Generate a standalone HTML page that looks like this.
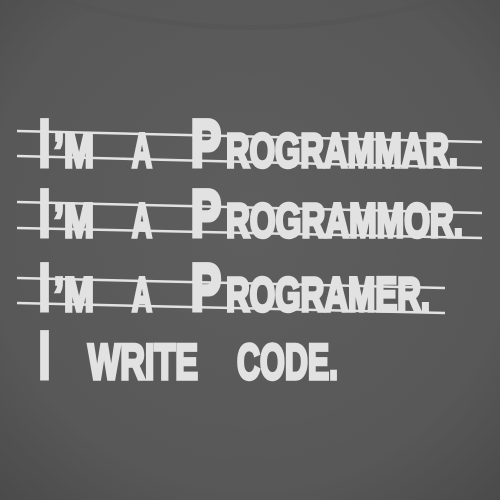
<!DOCTYPE html>
<html><head><meta charset="utf-8"><style>
html,body{margin:0;padding:0;width:500px;height:500px;overflow:hidden;background:#5a5a5a}
svg{display:block}
text{font-family:"Liberation Sans",sans-serif;font-weight:700;fill:#e2e2e2;stroke:#e2e2e2;stroke-linejoin:miter}
.b{stroke-width:5}
.s{stroke-width:3.5}
</style></head><body>
<svg width="500" height="500" viewBox="0 0 500 500">
<defs>
<radialGradient id="g" cx="50%" cy="45%" r="75%">
<stop offset="0" stop-color="#5e5e5e"/><stop offset="0.7" stop-color="#585858"/><stop offset="1" stop-color="#4a4a4a"/>
</radialGradient>
</defs>
<rect width="500" height="500" fill="url(#g)"/>
<path d="M60 0 Q250 55 440 0" stroke="#535353" stroke-width="5" fill="none" opacity="0.5"/>
<!-- line 1 -->
<text class="b" x="39" y="166" font-size="66" textLength="11" lengthAdjust="spacingAndGlyphs">I</text>
<text class="s" x="54" y="167" font-size="48" textLength="40" lengthAdjust="spacingAndGlyphs">’M</text>
<text class="s" x="132" y="167" font-size="48" textLength="20" lengthAdjust="spacingAndGlyphs">A</text>
<text class="b" x="191" y="166" font-size="66" textLength="30" lengthAdjust="spacingAndGlyphs">P</text>
<text class="s" x="226" y="167" font-size="48" textLength="232" lengthAdjust="spacingAndGlyphs">ROGRAMMAR.</text>
<!-- line 2 -->
<text class="b" x="39" y="236" font-size="66" textLength="11" lengthAdjust="spacingAndGlyphs">I</text>
<text class="s" x="54" y="237" font-size="48" textLength="40" lengthAdjust="spacingAndGlyphs">’M</text>
<text class="s" x="132" y="237" font-size="48" textLength="20" lengthAdjust="spacingAndGlyphs">A</text>
<text class="b" x="191" y="236" font-size="66" textLength="30" lengthAdjust="spacingAndGlyphs">P</text>
<text class="s" x="226" y="237" font-size="48" textLength="237" lengthAdjust="spacingAndGlyphs">ROGRAMMOR.</text>
<!-- line 3 -->
<text class="b" x="39" y="310" font-size="66" textLength="11" lengthAdjust="spacingAndGlyphs">I</text>
<text class="s" x="54" y="311" font-size="48" textLength="40" lengthAdjust="spacingAndGlyphs">’M</text>
<text class="s" x="132" y="311" font-size="48" textLength="20" lengthAdjust="spacingAndGlyphs">A</text>
<text class="b" x="191" y="310" font-size="66" textLength="30" lengthAdjust="spacingAndGlyphs">P</text>
<text class="s" x="226" y="311" font-size="48" textLength="204" lengthAdjust="spacingAndGlyphs">ROGRAMER.</text>
<!-- line 4 -->
<text class="b" x="39" y="378" font-size="66" textLength="11" lengthAdjust="spacingAndGlyphs">I</text>
<text class="s" x="88" y="379" font-size="50" textLength="110" lengthAdjust="spacingAndGlyphs">WRITE</text>
<text class="s" x="237" y="379" font-size="50" textLength="101" lengthAdjust="spacingAndGlyphs">CODE.</text>
<g stroke="#e2e2e2" stroke-width="2.5" fill="none">
<line x1="17" y1="131" x2="482" y2="142"/>
<line x1="17" y1="156" x2="482" y2="168"/>
<line x1="17" y1="202" x2="482" y2="213"/>
<line x1="17" y1="228" x2="482" y2="238"/>
<line x1="17" y1="278" x2="445" y2="288"/>
<line x1="17" y1="303" x2="445" y2="313"/>
</g>
</svg>
</body></html>
